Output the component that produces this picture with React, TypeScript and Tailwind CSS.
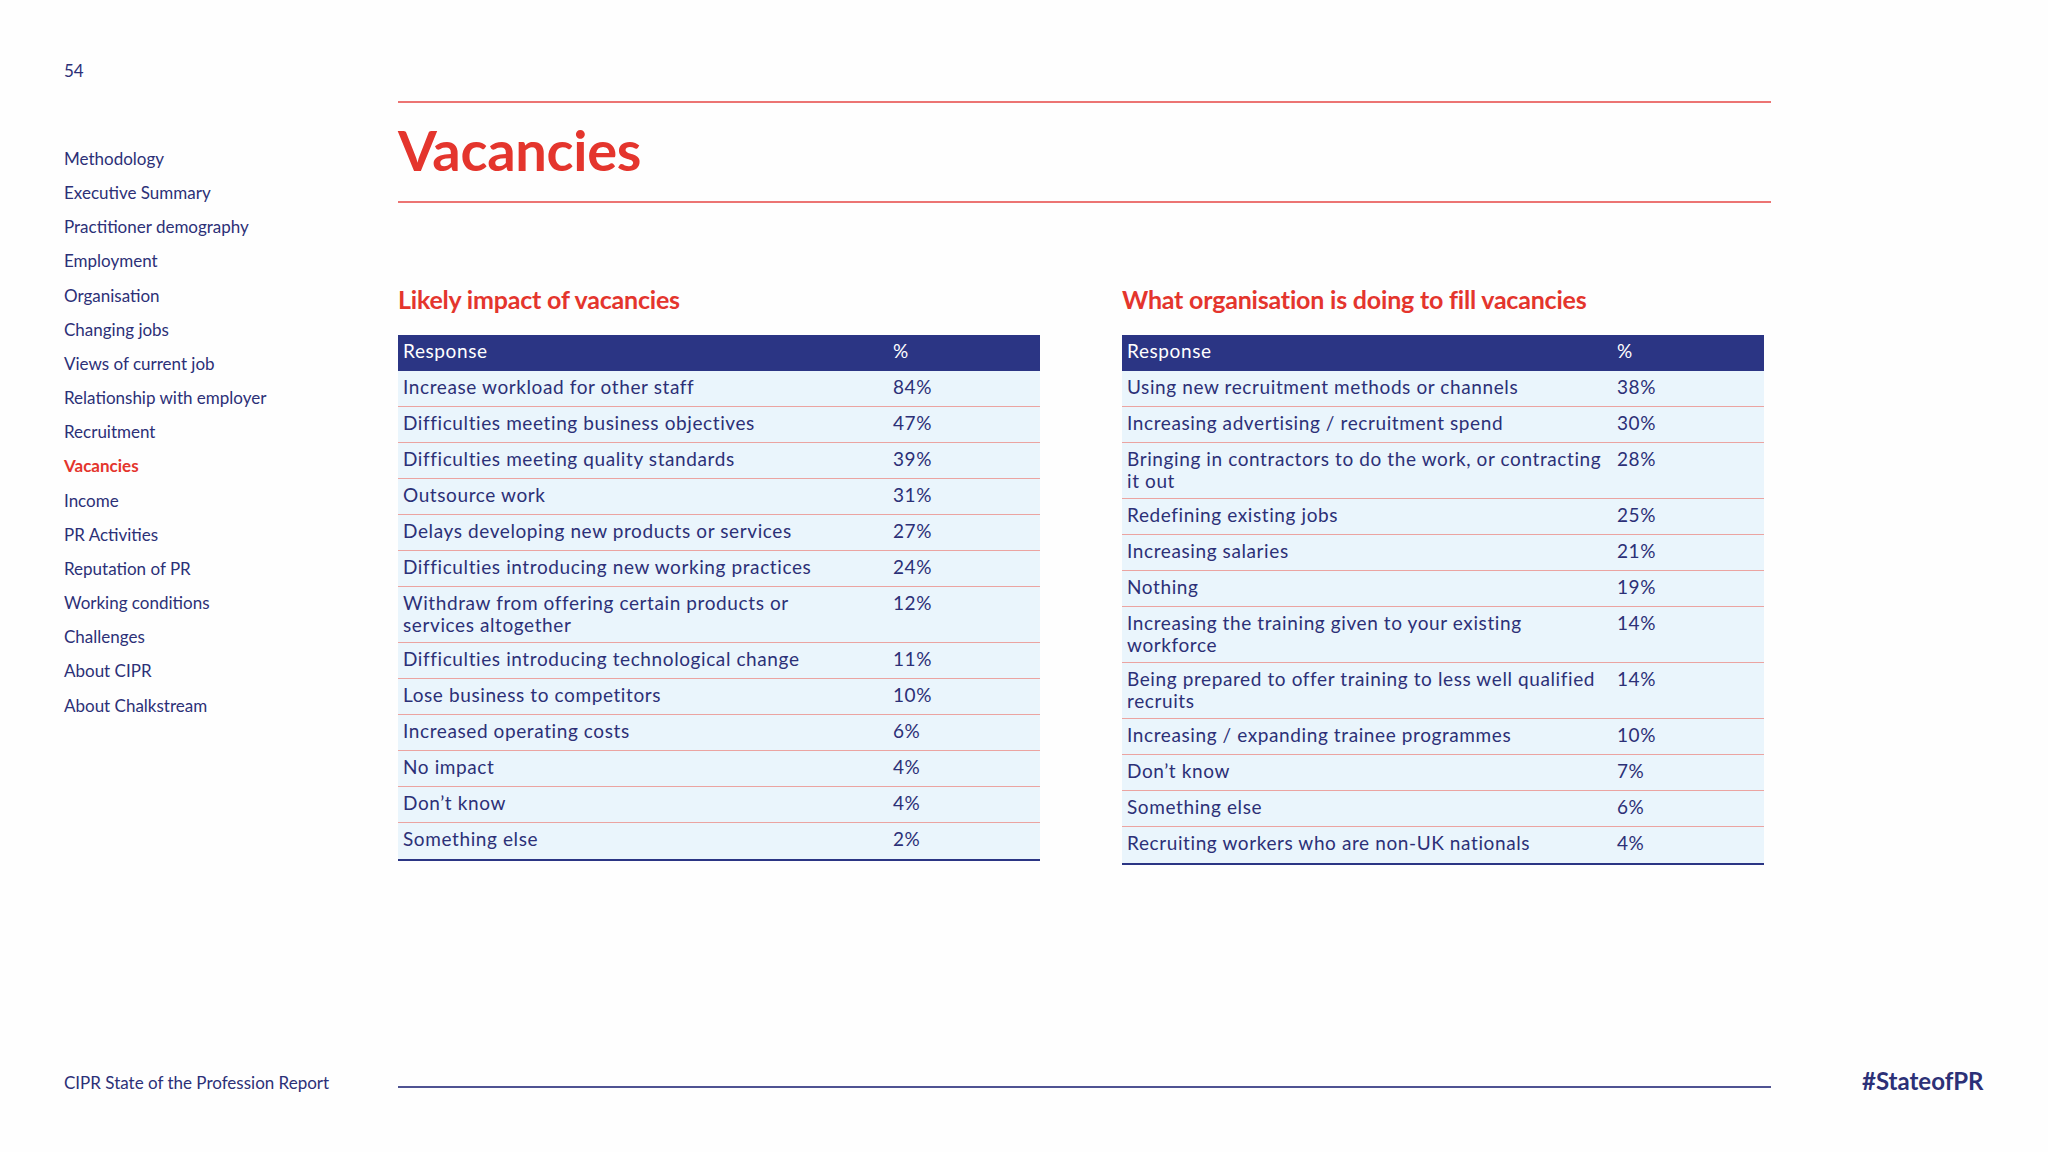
import React from "react";

type Row = { label: React.ReactNode; pct: string; double?: boolean };

const navItems = [
  "Methodology",
  "Executive Summary",
  "Practitioner demography",
  "Employment",
  "Organisation",
  "Changing jobs",
  "Views of current job",
  "Relationship with employer",
  "Recruitment",
  "Vacancies",
  "Income",
  "PR Activities",
  "Reputation of PR",
  "Working conditions",
  "Challenges",
  "About CIPR",
  "About Chalkstream",
];

const leftRows: Row[] = [
  { label: "Increase workload for other staff", pct: "84%" },
  { label: "Difficulties meeting business objectives", pct: "47%" },
  { label: "Difficulties meeting quality standards", pct: "39%" },
  { label: "Outsource work", pct: "31%" },
  { label: "Delays developing new products or services", pct: "27%" },
  { label: "Difficulties introducing new working practices", pct: "24%" },
  {
    label: (
      <>
        Withdraw from offering certain products or
        <br />
        services altogether
      </>
    ),
    pct: "12%",
    double: true,
  },
  { label: "Difficulties introducing technological change", pct: "11%" },
  { label: "Lose business to competitors", pct: "10%" },
  { label: "Increased operating costs", pct: "6%" },
  { label: "No impact", pct: "4%" },
  { label: "Don\u2019t know", pct: "4%" },
  { label: "Something else", pct: "2%" },
];

const rightRows: Row[] = [
  { label: "Using new recruitment methods or channels", pct: "38%" },
  { label: "Increasing advertising / recruitment spend", pct: "30%" },
  {
    label: (
      <>
        Bringing in contractors to do the work, or contracting
        <br />
        it out
      </>
    ),
    pct: "28%",
    double: true,
  },
  { label: "Redefining existing jobs", pct: "25%" },
  { label: "Increasing salaries", pct: "21%" },
  { label: "Nothing", pct: "19%" },
  {
    label: (
      <>
        Increasing the training given to your existing
        <br />
        workforce
      </>
    ),
    pct: "14%",
    double: true,
  },
  {
    label: (
      <>
        Being prepared to offer training to less well qualified
        <br />
        recruits
      </>
    ),
    pct: "14%",
    double: true,
  },
  { label: "Increasing / expanding trainee programmes", pct: "10%" },
  { label: "Don\u2019t know", pct: "7%" },
  { label: "Something else", pct: "6%" },
  { label: "Recruiting workers who are non-UK nationals", pct: "4%" },
];

function DataTable({ title, rows }: { title: string; rows: Row[] }) {
  return (
    <div className="w-[642px] flex flex-col">
      <h2 className="text-[25px] leading-[28px] font-bold text-[#e4352d] tracking-[-0.2px]">{title}</h2>
      <div className="mt-[22px] border-b-[2px] border-[#2b3584]">
        <div className="grid grid-cols-[490px_1fr] bg-[#2b3584] text-white text-[19px] leading-[22px] tracking-[0.6px] h-[36px]">
          <div className="pl-[5px] pt-[5px]">Response</div>
          <div className="pl-[5px] pt-[5px]">%</div>
        </div>
        {rows.map((r, i) => (
          <div
            key={i}
            className={
              "grid grid-cols-[490px_1fr] bg-[#eaf5fc] text-[#2c3077] text-[19px] leading-[22px] tracking-[0.6px] " +
              (i < rows.length - 1 ? "border-b border-[#eba4a1] " : "") +
              (r.double ? "h-[56px]" : "h-[36px]")
            }
          >
            <div className="pl-[5px] pt-[5px] whitespace-nowrap">{r.label}</div>
            <div className="pl-[5px] pt-[5px]">{r.pct}</div>
          </div>
        ))}
      </div>
    </div>
  );
}

export default function App() {
  return (
    <div
      className="w-[2048px] h-[1152px] flex flex-col bg-[#fefefe] text-[#2c3077] overflow-hidden"
      style={{ fontFamily: "Lato, 'Noto Sans', sans-serif" }}
    >
      <div className="flex flex-row">
        {/* Sidebar */}
        <div className="w-[398px] pl-[64px] pt-[61px] flex flex-col">
          <div className="text-[17px] leading-[20px] text-[#2c3077]">54</div>
          <nav className="mt-[61px] flex flex-col">
            {navItems.map((n) => (
              <div
                key={n}
                className={
                  n === "Vacancies"
                    ? "text-[17px] leading-[34.15px] font-bold text-[#e4352d]"
                    : "text-[17px] leading-[34.15px] text-[#2c3077]"
                }
              >
                {n}
              </div>
            ))}
          </nav>
        </div>

        {/* Main */}
        <div className="w-[1373px] flex flex-col">
          <div className="mt-[101px] h-[2px] bg-[#ec7473]" />
          <h1 className="mt-[19px] text-[56px] leading-[56px] font-bold text-[#e4352d] tracking-[-0.3px]">
            Vacancies
          </h1>
          <div className="mt-[23px] h-[2px] bg-[#ec7473]" />
          <div className="mt-[82px] flex flex-row gap-[82px]">
            <DataTable title="Likely impact of vacancies" rows={leftRows} />
            <DataTable title="What organisation is doing to fill vacancies" rows={rightRows} />
          </div>
        </div>
      </div>

      {/* Footer */}
      <div className="mt-auto mb-[54px] h-[30px] flex flex-row items-center">
        <div className="w-[398px] pl-[64px] text-[17px] leading-[20px] text-[#2c3077]">
          CIPR State of the Profession Report
        </div>
        <div className="w-[1373px] h-[2px] bg-[#4f5392] mt-[8px]" />
        <div className="ml-[91px] text-[24px] leading-[28px] font-bold text-[#2c3077] -mt-[4px]">#StateofPR</div>
      </div>
    </div>
  );
}
